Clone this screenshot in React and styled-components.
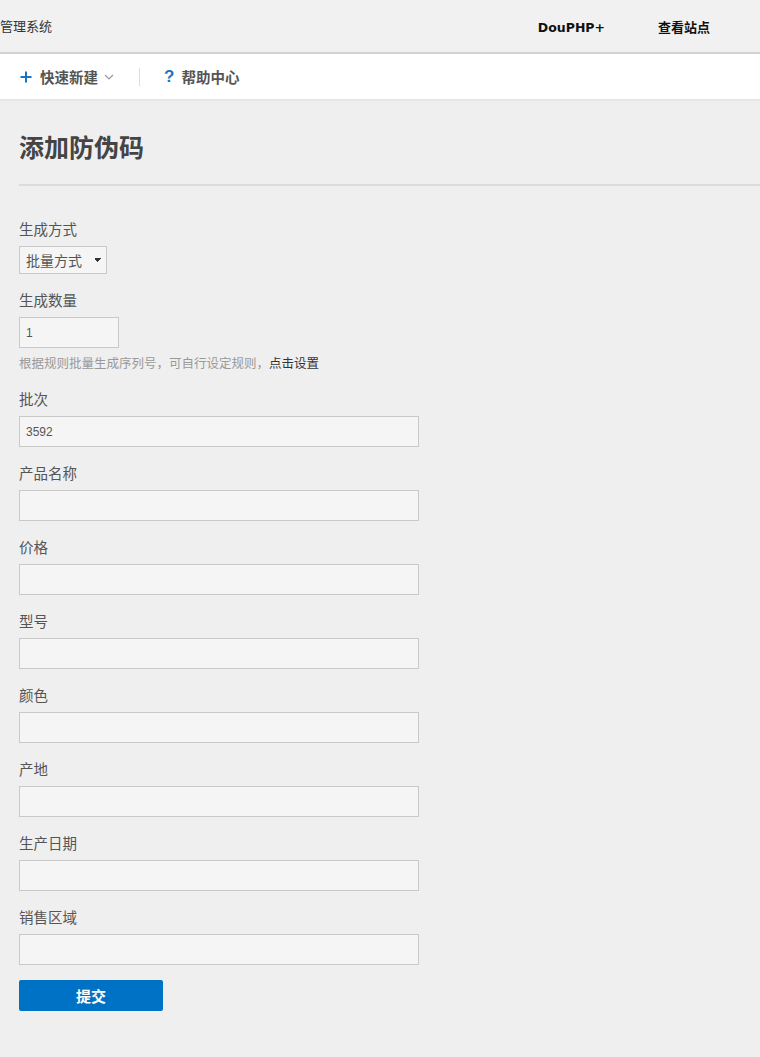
import React from "react";
import styled, { createGlobalStyle } from "styled-components";

const GlobalStyle = createGlobalStyle`
  html, body {
    margin: 0;
    padding: 0;
    background: #efefef;
    font-family: "Noto Sans CJK SC", "Liberation Sans", sans-serif;
    color: #555;
  }
  * { box-sizing: border-box; }
`;

const TopBar = styled.div`
  display: flex;
  align-items: center;
  height: 54px;
  background: #f1f1f1;
  border-bottom: 2px solid #d2d2d2;
`;

const Brand = styled.div`
  flex: 1;
  font-size: 13px;
  color: #333;
  line-height: 52px;
`;

const TopLink = styled.a`
  font-family: ${({ latin }) =>
    latin ? `"DejaVu Sans", sans-serif` : `"Noto Sans CJK SC", sans-serif`};
  font-size: ${({ latin }) => (latin ? 12.5 : 13)}px;
  padding-top: ${({ latin }) => (latin ? 3 : 0)}px;
  font-weight: bold;
  color: #111;
  text-decoration: none;
  margin-right: ${({ gap }) => gap}px;
`;

const SubBar = styled.div`
  display: flex;
  align-items: center;
  height: 47px;
  background: #fff;
  border-bottom: 2px solid #e6e6e6;
  padding-left: 20px;
`;

const SubItem = styled.a`
  display: flex;
  align-items: center;
  gap: ${({ gap }) => gap}px;
  font-size: 14.5px;
  font-weight: bold;
  color: #555;
  text-decoration: none;
`;

const Chevron = styled.svg`
  margin-left: -2px;
`;

const HelpMark = styled.span`
  color: #1a73c8;
  font-family: "Liberation Sans", sans-serif;
  font-size: 17px;
  font-weight: bold;
`;

const Separator = styled.span`
  width: 1px;
  height: 18px;
  background: #ddd;
  margin: 0 24px 0 25px;
`;

const Main = styled.main`
  padding: 0 0 40px 19px;
`;

const Title = styled.h1`
  margin: 27px 0 0;
  padding-bottom: 20px;
  font-size: 25px;
  line-height: 36px;
  font-weight: bold;
  color: #444;
  border-bottom: 2px solid #dcdcdc;
`;

const Form = styled.form`
  padding-top: 31px;
`;

const Field = styled.div`
  margin-bottom: 14px;
`;

const Label = styled.div`
  font-size: 14.5px;
  line-height: 24px;
  margin-bottom: 5px;
  color: #555;
`;

const Input = styled.input`
  display: block;
  width: ${({ w }) => w}px;
  height: 31px;
  padding: 0 6px;
  background: #f5f5f5;
  border: 1px solid #c9c9c9;
  font-family: "Liberation Sans", sans-serif;
  font-size: 12px;
  color: #555;
  outline: none;
`;

const Select = styled.select`
  display: block;
  width: 88px;
  height: 28px;
  padding: 0 6px;
  background: #f5f5f5;
  border: 1px solid #c9c9c9;
  font-family: "Noto Sans CJK SC", sans-serif;
  font-size: 14px;
  color: #555;
  appearance: none;
  background-image: linear-gradient(45deg, transparent 50%, #333 50%),
    linear-gradient(135deg, #333 50%, transparent 50%);
  background-size: 3px 5px, 3px 5px;
  background-position: 75px 11px, 78px 11px;
  background-repeat: no-repeat;
`;

const Hint = styled.div`
  margin-top: 5px;
  font-size: 12.5px;
  line-height: 20px;
  color: #999;

  a {
    color: #333;
    text-decoration: none;
  }
`;

const Submit = styled.button`
  width: 144px;
  height: 31px;
  margin-top: 1px;
  border: none;
  border-radius: 2px;
  background: #0072c6;
  color: #fff;
  font-family: "Noto Sans CJK SC", sans-serif;
  font-size: 15px;
  font-weight: bold;
`;

const fields = ["产品名称", "价格", "型号", "颜色", "产地", "生产日期", "销售区域"];

export default function App() {
  return (
    <>
      <GlobalStyle />
      <TopBar>
        <Brand>管理系统</Brand>
        <TopLink latin gap={53}>DouPHP+</TopLink>
        <TopLink gap={50}>查看站点</TopLink>
      </TopBar>
      <SubBar>
        <SubItem gap={8}>
          <svg width="12" height="12" viewBox="0 0 12 12">
            <path d="M6 0.5v11M0.5 6h11" stroke="#1a73c8" strokeWidth="2" />
          </svg>
          快速新建
          <Chevron width="10" height="6" viewBox="0 0 10 6">
            <path d="M1 1l4 4 4-4" stroke="#999" strokeWidth="1.2" fill="none" />
          </Chevron>
        </SubItem>
        <Separator />
        <SubItem gap={7}>
          <HelpMark>?</HelpMark>
          帮助中心
        </SubItem>
      </SubBar>
      <Main>
        <Title>添加防伪码</Title>
        <Form>
          <Field>
            <Label>生成方式</Label>
            <Select defaultValue="batch">
              <option value="batch">批量方式</option>
              <option value="single">单个方式</option>
            </Select>
          </Field>
          <Field>
            <Label>生成数量</Label>
            <Input w={100} defaultValue="1" />
            <Hint>
              根据规则批量生成序列号，可自行设定规则，<a href="#">点击设置</a>
            </Hint>
          </Field>
          <Field>
            <Label>批次</Label>
            <Input w={400} defaultValue="3592" />
          </Field>
          {fields.map((f) => (
            <Field key={f}>
              <Label>{f}</Label>
              <Input w={400} />
            </Field>
          ))}
          <Submit type="button">提交</Submit>
        </Form>
      </Main>
    </>
  );
}
